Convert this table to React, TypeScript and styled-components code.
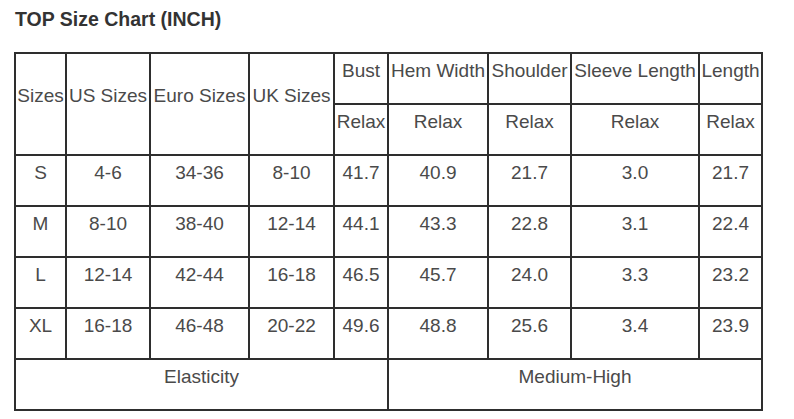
import React from "react";
import styled, { createGlobalStyle } from "styled-components";

const GlobalStyle = createGlobalStyle`
  html, body {
    margin: 0;
    padding: 0;
    background: #ffffff;
  }
  body {
    font-family: "Liberation Sans", Arial, sans-serif;
  }
`;

const Page = styled.div`
  width: 794px;
  height: 419px;
  box-sizing: border-box;
  padding: 8px 0 0 14px;
  background: #fff;
  overflow: hidden;
`;

const Title = styled.h1`
  margin: 0 0 0 1px;
  height: 22px;
  font-size: 19.5px;
  line-height: 22px;
  font-weight: bold;
  color: #333;
`;

const Chart = styled.div`
  margin-top: 22px;
  display: grid;
  width: max-content;
  grid-template-columns: 49px 82px 97px 83px 52px 98px 81px 126px 61px;
  grid-auto-rows: 49px;
  gap: 2px;
  padding: 2px;
  background: #2e2e2e;
`;

const Cell = styled.div<{ $rowSpan?: number; $colSpan?: number }>`
  background: #fff;
  display: flex;
  align-items: center;
  justify-content: center;
  box-sizing: border-box;
  padding-bottom: 16px;
  font-size: 19px;
  line-height: 22px;
  color: #4a4a4a;
  white-space: nowrap;
  overflow: visible;
  grid-row: ${(p) => (p.$rowSpan ? `span ${p.$rowSpan}` : "auto")};
  grid-column: ${(p) => (p.$colSpan ? `span ${p.$colSpan}` : "auto")};
`;

const rows = [
  ["S", "4-6", "34-36", "8-10", "41.7", "40.9", "21.7", "3.0", "21.7"],
  ["M", "8-10", "38-40", "12-14", "44.1", "43.3", "22.8", "3.1", "22.4"],
  ["L", "12-14", "42-44", "16-18", "46.5", "45.7", "24.0", "3.3", "23.2"],
  ["XL", "16-18", "46-48", "20-22", "49.6", "48.8", "25.6", "3.4", "23.9"],
];

const sizeHeads = ["Sizes", "US Sizes", "Euro Sizes", "UK Sizes"];
const measureHeads = ["Bust", "Hem Width", "Shoulder", "Sleeve Length", "Length"];

export default function App() {
  return (
    <>
      <GlobalStyle />
      <Page>
        <Title>TOP Size Chart (INCH)</Title>
        <Chart>
          {sizeHeads.map((h) => (
            <Cell key={h} $rowSpan={2}>
              {h}
            </Cell>
          ))}
          {measureHeads.map((h) => (
            <Cell key={h}>{h}</Cell>
          ))}
          {measureHeads.map((h) => (
            <Cell key={`r-${h}`}>Relax</Cell>
          ))}
          {rows.map((r) =>
            r.map((v, i) => <Cell key={`${r[0]}-${i}`}>{v}</Cell>)
          )}
          <Cell $colSpan={5}>Elasticity</Cell>
          <Cell $colSpan={4}>Medium-High</Cell>
        </Chart>
      </Page>
    </>
  );
}
